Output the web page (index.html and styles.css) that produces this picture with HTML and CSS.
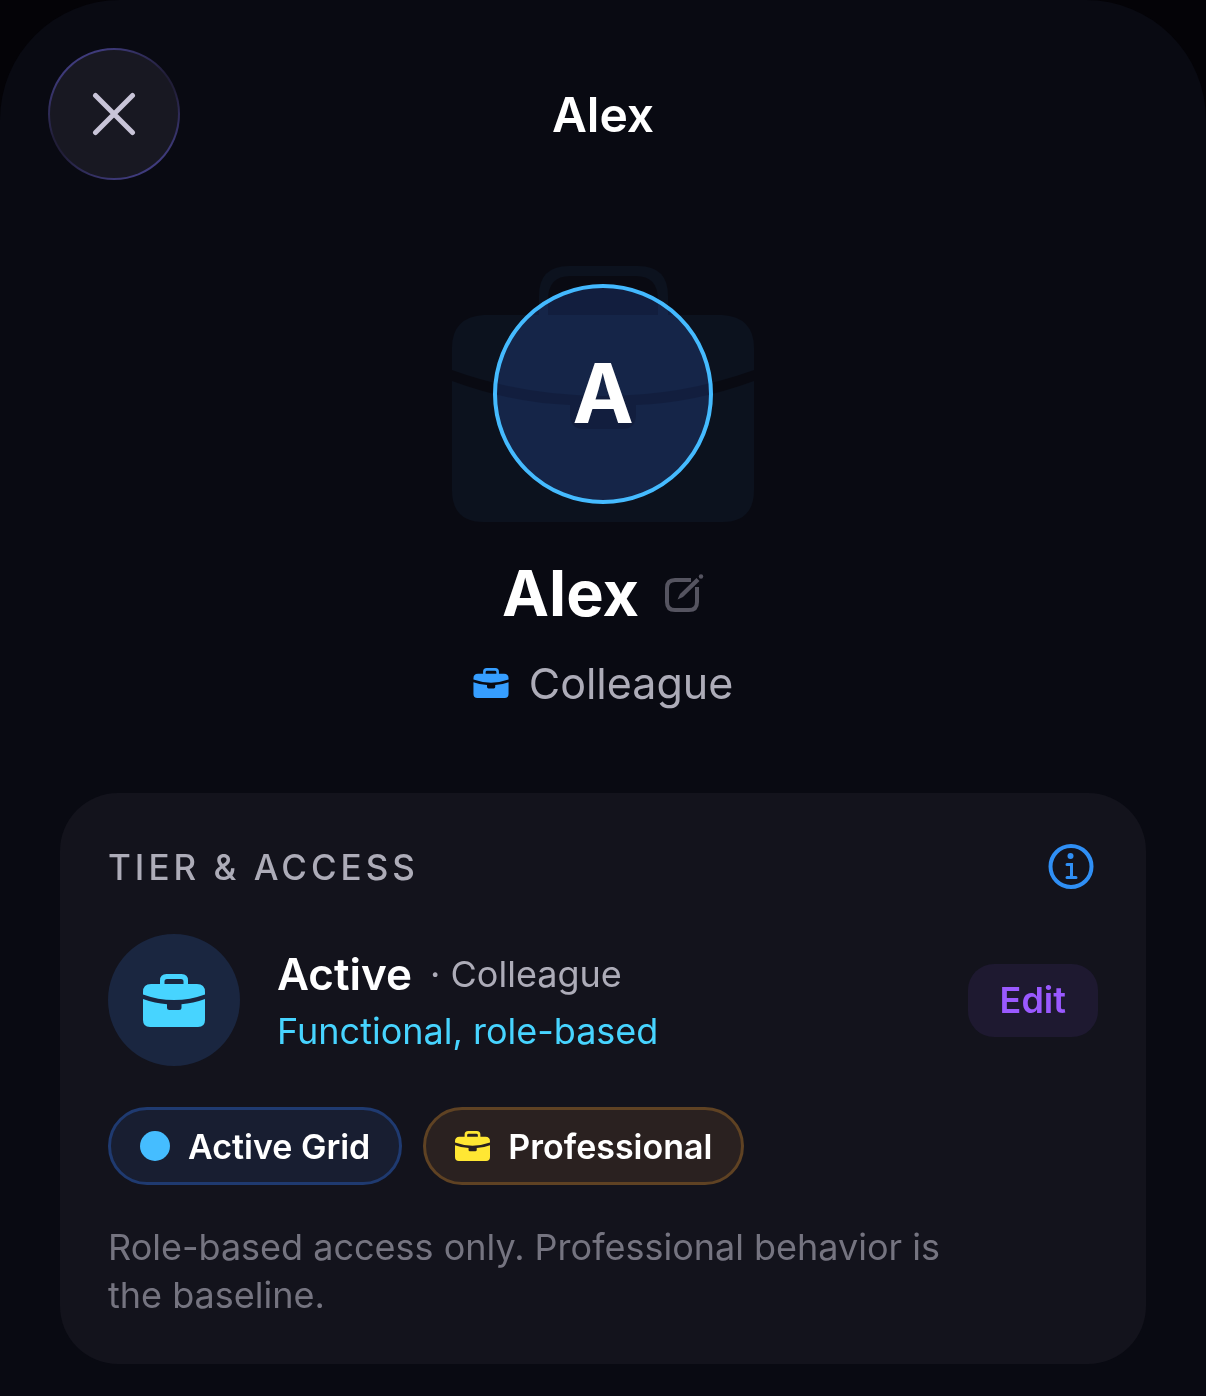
FILE: index.html
```html
<!DOCTYPE html>
<html lang="en">
<head>
    <meta charset="UTF-8">
    <meta name="viewport" content="width=device-width, initial-scale=1.0">
    <title>Alex</title>
    <link rel="stylesheet" href="styles.css">
</head>
<body>
    <svg class="sprite" aria-hidden="true">
        <symbol id="briefcase" viewBox="0 0 62 53">
            <path fill-rule="evenodd" d="M17 10V6.500Q17 0 23.500 0H38.500Q45 0 45 6.500V10H54Q62 10 62 18V20.500Q47 26 31 26Q15 26 0 20.500V18Q0 10 8 10ZM21.500 10H40.500V7.500Q40.500 5 38 5H24Q21.500 5 21.500 7.500Z"/>
            <path d="M0 25Q12 29.500 24 30.200V33.500Q24 36 26.500 36H36Q38.500 36 38.500 33.500V30.200Q50 29.500 62 25V46Q62 53 55 53H7Q0 53 0 46Z"/>
        </symbol>
    </svg>

    <main class="sheet">
        <header class="top-bar">
            <button class="close" type="button" aria-label="Close">
                <svg viewBox="0 0 44 44" width="44" height="44"><path d="M3.500 3.500L40.500 40.500M40.500 3.500L3.500 40.500"/></svg>
            </button>
            <h1 class="title">Alex</h1>
        </header>

        <section class="profile">
            <div class="portrait">
                <div class="avatar"></div>
                <svg class="backdrop" viewBox="0 0 302 256" width="302" height="256">
                    <path fill-rule="evenodd" d="M87 49V30Q87 0 117 0H186Q216 0 216 30V49H270Q302 51 302 82V104Q230 130 151 130Q72 130 0 104V82Q0 51 32 49ZM96 49H206V34Q206 10 184 10H118Q96 10 96 34Z"/>
                    <path d="M0 115Q60 137 118 139V149Q118 163 132 163H170Q184 163 184 149V139Q242 137 302 115V224Q302 256 270 256H32Q0 256 0 224Z"/>
                </svg>
                <span class="initial">A</span>
            </div>
            <div class="name-row">
                <h2 class="name">Alex</h2>
                <button class="rename" type="button" aria-label="Edit name">
                    <svg viewBox="0 0 39 39" width="39" height="39">
                        <path d="M26 6H10Q2 6 2 14V28Q2 36 10 36H24Q32 36 32 28V13"/>
                        <path class="pencil" d="M12.500 25.500L15 20L31.500 4L34.500 7L18 23Z"/>
                        <circle class="pencil" cx="36" cy="2.500" r="2.200"/>
                    </svg>
                </button>
            </div>
            <div class="role">
                <svg width="36" height="30"><use href="#briefcase"/></svg>
                <span>Colleague</span>
            </div>
        </section>

        <section class="card">
            <div class="card-head">
                <h3 class="card-title">TIER &amp; ACCESS</h3>
                <button class="info" type="button" aria-label="About tiers">
                    <svg viewBox="0 0 46 46" width="46" height="46">
                        <circle class="ring" cx="23" cy="22.500" r="20.500"/>
                        <circle cx="22.500" cy="12" r="3"/>
                        <path class="line" d="M19 20.500H23.500V33.500M19 33.500H28"/>
                    </svg>
                </button>
            </div>

            <div class="tier">
                <div class="tier-icon">
                    <svg width="62" height="53"><use href="#briefcase"/></svg>
                </div>
                <div class="tier-text">
                    <p class="tier-line"><strong>Active</strong> <span>· Colleague</span></p>
                    <p class="tier-note">Functional, role-based</p>
                </div>
                <button class="edit" type="button">Edit</button>
            </div>

            <div class="tags">
                <span class="tag blue"><i class="dot"></i>Active Grid</span>
                <span class="tag amber"><svg width="35" height="30"><use href="#briefcase"/></svg>Professional</span>
            </div>

            <p class="summary">Role-based access only. Professional behavior is the baseline.</p>
        </section>
    </main>
</body>
</html>
```

FILE: styles.css
```css
* {
    box-sizing: border-box;
}

body {
    margin: 0;
    background-color: #040307;
    color: #fff;
    font-family: Inter, "Liberation Sans", sans-serif;
}

h1, h2, h3, p {
    margin: 0;
}

button {
    padding: 0;
    border: none;
    background: none;
    color: inherit;
    font-family: inherit;
    cursor: pointer;
}

svg {
    display: block;
    flex: none;
    fill: currentColor;
}

.sprite {
    position: absolute;
    width: 0;
    height: 0;
}

.sheet {
    min-height: 100vh;
    padding: 48px 60px 31px;
    border-radius: 120px 120px 0 0;
    background-color: #090a12;
}

.top-bar {
    display: grid;
    grid-template-columns: 132px 1fr 132px;
    align-items: center;
    margin: 0 -12px;
}

.close {
    display: grid;
    place-items: center;
    height: 132px;
    border: 2px solid transparent;
    border-radius: 50%;
    background:
        linear-gradient(#181822, #181822) padding-box,
        linear-gradient(150deg, #3f3b7c 15%, #211e38 45%, #211e38 55%, #3f3b7c 85%) border-box;
    color: #c8c4d8;
}

.close svg {
    fill: none;
    stroke: currentColor;
    stroke-width: 5;
    stroke-linecap: round;
}

.title {
    padding-top: 2px;
    font-size: 48px;
    line-height: 60px;
    font-weight: 600;
    text-align: center;
}

.profile {
    display: flex;
    flex-direction: column;
    align-items: center;
    margin-top: 86px;
}

.portrait {
    display: grid;
    place-items: center;
}

.portrait > * {
    grid-area: 1 / 1;
}

/* tints the avatar as well as the sheet */
.backdrop {
    color: #03080d;
    mix-blend-mode: screen;
}

.avatar {
    width: 220px;
    height: 220px;
    border: 4px solid #43b9ff;
    border-radius: 50%;
    background-color: #121e3e;
}

.initial {
    font-size: 82px;
    line-height: 100px;
    font-weight: 700;
}

.name-row {
    display: flex;
    align-items: center;
    gap: 26px;
    margin-top: 31px;
}

.name {
    font-size: 63px;
    line-height: 80px;
    font-weight: 700;
}

.rename {
    color: #555460;
}

.rename svg {
    fill: none;
    stroke: currentColor;
    stroke-width: 4;
}

.rename .pencil {
    fill: currentColor;
    stroke: none;
}

.role {
    display: flex;
    align-items: center;
    gap: 20px;
    margin-top: 22px;
    color: #adacb8;
    font-size: 43px;
    line-height: 56px;
}

.role svg {
    color: #369eff;
}

.card {
    margin-top: 82px;
    padding: 51px 48px 45px;
    border-radius: 58px;
    background-color: #13131c;
}

.card-head {
    display: flex;
    align-items: center;
    justify-content: space-between;
    padding-right: 4px;
}

.card-title {
    color: #adacb8;
    font-size: 35px;
    line-height: 46px;
    font-weight: 500;
    letter-spacing: 4px;
}

.info {
    color: #2f8ff5;
}

.info .ring,
.info .line {
    fill: none;
    stroke: currentColor;
    stroke-width: 3;
    stroke-linecap: round;
}

.info .ring {
    stroke-width: 4;
}

.tier {
    display: flex;
    align-items: center;
    gap: 37px;
    margin-top: 44px;
}

.tier-icon {
    display: grid;
    place-items: center;
    width: 132px;
    height: 132px;
    border-radius: 50%;
    background-color: #1a2640;
    color: #47d4ff;
}

.tier-text {
    flex: 1;
    padding-top: 6px;
    font-size: 36px;
    line-height: 57px;
}

.tier-line {
    display: flex;
    align-items: center;
    gap: 18px;
    color: #adacb8;
}

.tier-line strong {
    color: #fff;
    font-size: 44px;
    font-weight: 600;
}

.tier-note {
    color: #47d4ff;
}

.edit {
    padding: 0 32px;
    border-radius: 26px;
    background-color: #1e1930;
    color: #9a59ff;
    font-size: 36px;
    line-height: 73px;
    font-weight: 600;
}

.tags {
    display: flex;
    gap: 21px;
    margin: 41px 0 38px;
}

.tag {
    display: flex;
    align-items: center;
    gap: 18px;
    height: 78px;
    padding: 0 29px;
    border: 3px solid;
    border-radius: 39px;
    font-size: 34px;
    font-weight: 600;
}

.blue {
    border-color: #1f3a70;
    background-color: #181e31;
}

.amber {
    border-color: #5f4223;
    background-color: #2a2120;
}

.amber svg {
    color: #ffe733;
}

.dot {
    width: 30px;
    height: 30px;
    border-radius: 50%;
    background-color: #45bdff;
}

.summary {
    max-width: 880px;
    color: #757480;
    font-size: 36px;
    line-height: 48px;
}
```
